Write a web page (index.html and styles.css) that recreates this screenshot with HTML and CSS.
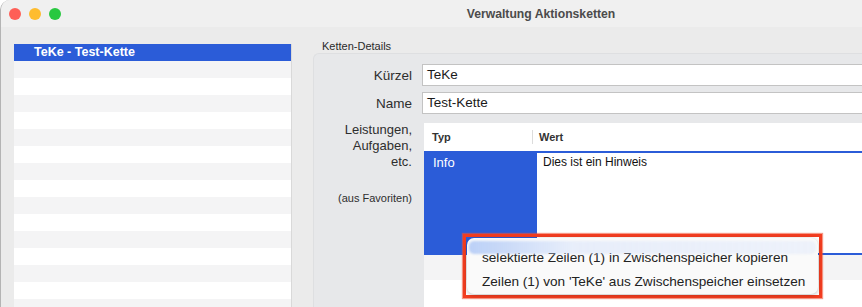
FILE: index.html
```html
<html>
    <head>
        <meta charset="utf-8">
        <meta name="viewport" content="width=device-width, initial-scale=1.0">
        <title>Verwaltung Aktionsketten</title>
        <link rel="stylesheet" href="styles.css">
    </head>
    <body>
        <div class="window">
            <div class="titlebar">
                <div class="lights">
                    <span class="light red"></span>
                    <span class="light yellow"></span>
                    <span class="light green"></span>
                </div>
                <div class="title">Verwaltung Aktionsketten</div>
            </div>

            <div class="content">
                <div class="list">
                    <div class="row selected">TeKe - Test-Kette</div>
                    <div class="row"></div><div class="row"></div><div class="row"></div>
                    <div class="row"></div><div class="row"></div><div class="row"></div>
                    <div class="row"></div><div class="row"></div><div class="row"></div>
                    <div class="row"></div><div class="row"></div><div class="row"></div>
                    <div class="row"></div><div class="row"></div><div class="row"></div>
                </div>

                <div class="details">
                    <div class="group-title">Ketten-Details</div>
                    <div class="group">
                        <div class="field-row">
                            <div class="label">Kürzel</div>
                            <div class="field">TeKe</div>
                        </div>
                        <div class="field-row">
                            <div class="label">Name</div>
                            <div class="field">Test-Kette</div>
                        </div>
                        <div class="table-row">
                            <div class="label multi">
                                Leistungen,<br>Aufgaben,<br>etc.
                                <div class="hint">(aus Favoriten)</div>
                            </div>
                            <div class="table">
                                <div class="thead">
                                    <div class="th typ">Typ</div>
                                    <div class="th wert">Wert</div>
                                </div>
                                <div class="trow active">
                                    <div class="td typ">Info</div>
                                    <div class="td wert">Dies ist ein Hinweis</div>
                                </div>
                                <div class="trow alt"></div>
                                <div class="trow"></div>
                            </div>
                        </div>
                    </div>
                </div>
            </div>

            <div class="mark">
                <div class="menu">
                    <div class="menu-item hover">selektierte Zeilen (1) in Zwischenspeicher kopieren</div>
                    <div class="menu-item">Zeilen (1) von 'TeKe' aus Zwischenspeicher einsetzen</div>
                </div>
            </div>
        </div>
    </body>
</html>
```

FILE: styles.css
```css
body {
    margin: 0;
    background-color: #ffffff;
    font-family: "Liberation Sans", Arial, sans-serif;
    overflow: hidden;
}

.window {
    position: relative;
    height: 307px;
    background-color: #ebebeb;
    border-left: 1px solid #b4b4b4;
    border-top-left-radius: 10px;
    overflow: hidden;
}

.titlebar {
    height: 27px;
    background-color: #f0f0f0;
    display: flex;
    align-items: center;
}

.lights {
    display: flex;
    gap: 8px;
    padding-left: 8px;
    width: 280px;
}

.light {
    width: 12px;
    height: 12px;
    border-radius: 50%;
}

.red { background-color: #fe5f57; }
.yellow { background-color: #febc2e; }
.green { background-color: #28c840; }

.title {
    width: 504px;
    text-align: center;
    font-size: 12.2px;
    font-weight: bold;
    color: #4b4b4b;
}

.content {
    display: flex;
    padding-top: 17px;
}

.list {
    margin-left: 13px;
    width: 277px;
    height: 300px;
    background-color: #ffffff;
    border-right: 1px solid #d9d9d9;
}

.row {
    height: 17px;
}

.row:nth-child(even) {
    background-color: #f4f4f5;
}

.row.selected {
    background-color: #2b5cd8;
    color: #ffffff;
    font-size: 12.5px;
    font-weight: bold;
    line-height: 17px;
    padding-left: 20px;
}

.details {
    flex: 1;
    padding-left: 21px;
}

.group-title {
    font-size: 11px;
    color: #2a2a2a;
    height: 9px;
    line-height: 6px;
    padding-left: 9px;
    position: relative;
    top: -1px;
}

.group {
    background-color: #e7e8ea;
    border-top-left-radius: 6px;
    border-left: 1px solid #dedfe1;
    border-top: 1px solid #dedfe1;
    padding-top: 10px;
    height: 260px;
}

.field-row {
    display: flex;
    align-items: center;
    margin-bottom: 6px;
}

.label {
    width: 98px;
    text-align: right;
    font-size: 13.5px;
    color: #2e2e2e;
    padding-right: 10px;
}

.field {
    flex: 1;
    height: 20px;
    line-height: 20px;
    background-color: #ffffff;
    border: 1px solid #c3c3c3;
    border-right: none;
    font-size: 13.5px;
    color: #1a1a1a;
    padding-left: 4px;
}

.table-row {
    display: flex;
    margin-top: 9px;
}

.label.multi {
    font-size: 13px;
    line-height: 16px;
    position: relative;
    top: -1px;
}

.hint {
    font-size: 11px;
    margin-top: 20px;
}

.table {
    flex: 1;
    margin-left: 2px;
    background-color: #ffffff;
    height: 200px;
}

.thead {
    display: flex;
    height: 28px;
    align-items: center;
    font-size: 11px;
    font-weight: bold;
    color: #333333;
}

.th.typ {
    width: 100px;
    padding-left: 8px;
    border-right: 1px solid #dcdcdc;
    height: 14px;
    line-height: 14px;
}

.th.wert {
    padding-left: 6px;
}

.trow {
    display: flex;
    height: 25px;
}

.trow.alt {
    background-color: #f4f4f5;
}

.trow.active {
    height: 104px;
}

.td.typ {
    width: 104px;
    background-color: #2b5cd8;
    color: #ffffff;
    font-size: 13px;
    padding-left: 9px;
    padding-top: 4px;
}

.td.wert {
    flex: 1;
    border-top: 2px solid #2b5cd8;
    border-bottom: 2px solid #2b5cd8;
    font-size: 12px;
    color: #111111;
    padding-left: 6px;
    padding-top: 2px;
}

.mark {
    position: absolute;
    left: 462px;
    top: 234px;
    width: 353px;
    height: 58px;
    border: 3px solid #f23d20;
    box-shadow: 0 0 1px 1px rgba(242, 80, 50, 0.6);
}

.menu {
    margin: 1px;
    height: 56px;
    border-radius: 7px;
    background-color: #fafafa;
    box-shadow: 0 1px 4px rgba(0, 0, 0, 0.25);
    padding-top: 8px;
    box-sizing: border-box;
    position: relative;
}

.menu-item {
    height: 24px;
    line-height: 24px;
    font-size: 13.6px;
    color: #222222;
    padding-left: 15px;
    position: relative;
}

.menu-item.hover::before {
    content: "";
    position: absolute;
    left: 2px;
    right: 2px;
    top: -5px;
    height: 13px;
    border-radius: 5px;
    background: linear-gradient(to right, rgba(160, 190, 245, 0.7), rgba(214, 226, 251, 0.5) 30%, rgba(214, 226, 251, 0.35));
    filter: blur(1px);
}
```
